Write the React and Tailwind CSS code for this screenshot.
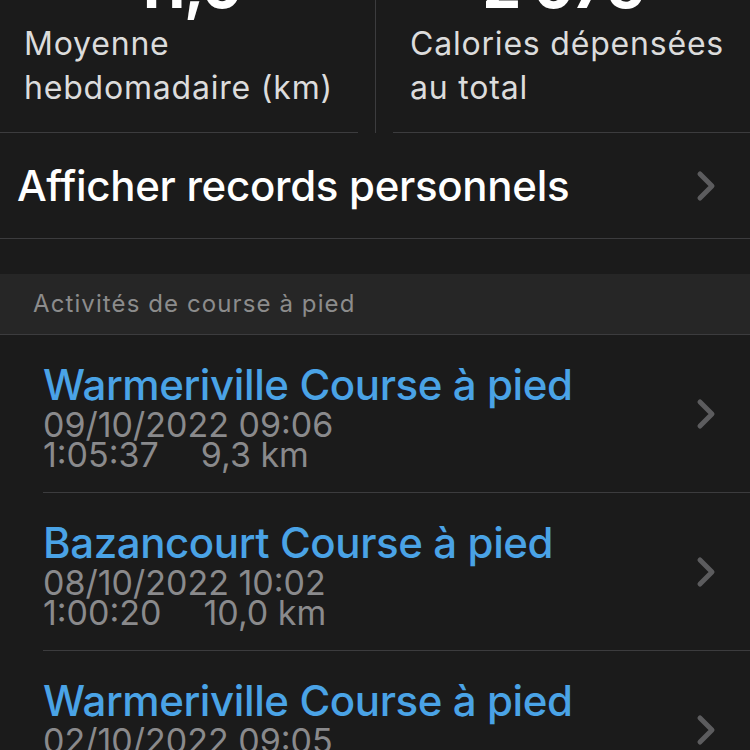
import React from 'react'

const font = { fontFamily: 'Inter, "Liberation Sans", sans-serif' }

const activities = [
  { title: 'Warmeriville Course à pied', date: '09/10/2022 09:06', time: '1:05:37', dist: '9,3 km' },
  { title: 'Bazancourt Course à pied', date: '08/10/2022 10:02', time: '1:00:20', dist: '10,0 km' },
  { title: 'Warmeriville Course à pied', date: '02/10/2022 09:05', time: '1:00:41', dist: '9,6 km' },
]

function Chevron() {
  return (
    <svg width="20" height="32" viewBox="0 0 20 32" className="shrink-0">
      <path d="M4 4 L16 16 L4 28" fill="none" stroke="#5c5c5e" strokeWidth="5" strokeLinecap="round" strokeLinejoin="round" />
    </svg>
  )
}

function Stat({ value, label, side }) {
  return (
    <div className="flex flex-col h-[133px]">
      <div className="text-center text-white font-bold text-[62px] leading-[62px] -mt-[45px] tracking-tight">{value}</div>
      <div className={`text-[#dcdcdc] text-[32px] leading-[44px] tracking-[0.8px] mt-[5px] ${side === 'left' ? 'pl-6' : 'pl-[34px]'}`}>{label}</div>
      <div className="flex-1" />
      <div className={`h-px bg-[#3c3c3e] ${side === 'left' ? 'mr-[17px]' : 'ml-[17px]'}`} />
    </div>
  )
}

export default function App() {
  return (
    <div className="w-[750px] h-[750px] overflow-hidden bg-[#1b1b1b]" style={font}>
      {/* stats */}
      <div className="flex">
        <div className="w-[375px]">
          <Stat value="11,0" label={<>Moyenne<br />hebdomadaire (km)</>} side="left" />
        </div>
        <div className="w-px h-[133px] bg-[#3c3c3e]" />
        <div className="flex-1">
          <Stat value="2 075" label={<>Calories dépensées<br />au total</>} side="right" />
        </div>
      </div>

      {/* records */}
      <div className="flex items-center justify-between h-[106px] pl-[17px] pr-[34px] border-b border-[#3c3c3e]">
        <span className="text-white text-[42px] font-medium tracking-[-0.3px]">Afficher records personnels</span>
        <Chevron />
      </div>

      <div className="h-[35px]" />

      {/* section header */}
      <div className="h-[61px] bg-[#262626] border-b border-[#3c3c3e] flex items-center pl-[33px]">
        <span className="text-[#8c8c8c] text-[24px] tracking-[1.1px]">Activités de course à pied</span>
      </div>

      {/* list */}
      <div className="pl-[43px]">
        {activities.map((a, i) => (
          <div key={i} className="flex items-center h-[158px] pr-[34px] border-b border-[#3c3c3e]">
            <div className="flex-1 pt-[4px]">
              <div className="text-[#4aa3e6] text-[42px] leading-[46px] font-medium tracking-[-0.4px]">{a.title}</div>
              <div className="text-[#8a8a8c] text-[34px] leading-[31px] mt-[1px]">{a.date}</div>
              <div className="text-[#8a8a8c] text-[34px] leading-[30px] flex">
                <span>{a.time}</span>
                <span className="ml-[42px]">{a.dist}</span>
              </div>
            </div>
            <Chevron />
          </div>
        ))}
      </div>
    </div>
  )
}
